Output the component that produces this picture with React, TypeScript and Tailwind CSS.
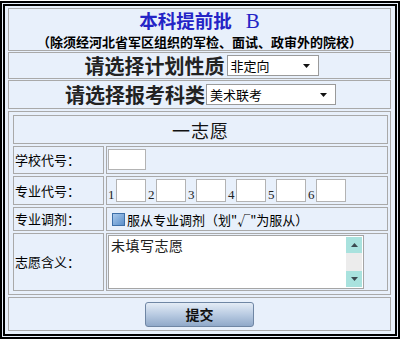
import React from 'react'

const cjk = "font-['Noto_Sans_CJK_SC','Noto_Sans',sans-serif]"
const serif = "font-['Liberation_Serif','Noto_Sans_CJK_SC',serif]"

const Cell = ({className = '', children}: {className?: string; children?: React.ReactNode}) => (
    <div className={`border border-[#a9a9a9] bg-[#e8f0fb] ${className}`}>{children}</div>
)

const FakeSelect = ({value, width}: {value: string; width: string}) => (
    <div className={`${width} h-[21px] bg-white border border-[#9a9a9a] flex items-center justify-between pl-[3px] pr-[8px]`}>
        <span className="text-[13px] font-normal text-black leading-none">{value}</span>
        <svg width="7" height="4" viewBox="0 0 7 4">
            <path d="M0 0H7L3.5 4Z" fill="#111"/>
        </svg>
    </div>
)

const App = () => {
    const codes = [1, 2, 3, 4, 5, 6]

    return (
        <div className={`w-[401px] h-[340px] bg-white pt-px ${cjk}`}>
            <div className="w-[400px] h-[338px] border-[5px] border-double border-black bg-[#e8f0fb] pt-[2px] pl-[3px] pr-[4px] flex flex-col">
                <Cell className="h-[43px] flex flex-col items-center">
                    <div className="h-[22px] pt-[2px] flex items-baseline justify-center text-[#2424c6]">
                        <span className="text-[18.5px] font-bold leading-none">本科提前批</span>
                        <span className={`${serif} text-[21px] font-normal leading-none ml-[14px]`}>B</span>
                    </div>
                    <div className="mt-[4px] text-[13px] leading-none font-bold text-black whitespace-nowrap">
                        （除须经河北省军区组织的军检、面试、政审外的院校）
                    </div>
                </Cell>

                <Cell className="h-[27px] mt-px flex items-center justify-center pl-[4px]">
                    <span className="text-[20px] font-bold text-[#222] leading-none mr-[2px]">请选择计划性质</span>
                    <FakeSelect value="非定向" width="w-[92px]"/>
                </Cell>

                <Cell className="h-[29px] mt-px flex items-center justify-center pl-[2px]">
                    <span className="text-[20px] font-bold text-[#222] leading-none mr-px">请选择报考科类</span>
                    <FakeSelect value="美术联考" width="w-[130px]"/>
                </Cell>

                <Cell className="h-[184px] mt-[2px] pt-[3px] pl-[4px] pr-[2px]">
                    <div className="flex flex-col gap-[2px]">
                        <Cell className="h-[29px] flex items-center justify-center">
                            <span className="text-[18px] text-[#111] leading-none tracking-[1px]">一志愿</span>
                        </Cell>

                        <div className="grid grid-cols-[91px_1fr] gap-[2px] text-[13px] text-black">
                            <Cell className="h-[28px] flex items-center pl-[1px]">学校代号：</Cell>
                            <Cell className="h-[28px] flex items-start pt-[2px] pl-[1px]">
                                <div className="w-[38px] h-[21px] bg-white border border-[#b3b3b3]"/>
                            </Cell>

                            <Cell className="h-[29px] flex items-center pl-[1px]">专业代号：</Cell>
                            <Cell className="h-[29px] flex items-center pl-[1px]">
                                {codes.map((n) => (
                                    <div key={n} className="flex items-end mr-[2px]">
                                        <span className={`${serif} w-[8px] text-[13px] leading-none mb-[1px] text-[#222]`}>{n}</span>
                                        <div className="w-[30px] h-[23px] bg-white border border-[#b3b3b3]"/>
                                    </div>
                                ))}
                            </Cell>

                            <Cell className="h-[24px] flex items-center pl-[1px]">专业调剂：</Cell>
                            <Cell className="h-[24px] flex items-center pl-[5px]">
                                <div className="w-[13px] h-[13px] border border-[#3d6fa8] bg-gradient-to-br from-[#a9c9ec] to-[#5b8fc9] mr-[2px]"/>
                                <span className="leading-none">服从专业调剂（划"√"为服从）</span>
                            </Cell>

                            <Cell className="h-[58px] flex items-center pl-[1px]">志愿含义：</Cell>
                            <Cell className="h-[58px] pt-[1px] pl-[1px]">
                                <div className="w-[256px] h-[54px] bg-white border border-[#a5a5a5] flex">
                                    <div className="flex-1 text-[14px] leading-[16px] text-[#222] pl-[2px] pt-[1px] tracking-[0.5px]">
                                        未填写志愿
                                    </div>
                                    <div className="w-[16px] flex flex-col my-px mr-px">
                                        <div className="h-[16px] bg-[#a9e2de] flex items-center justify-center">
                                            <svg width="7" height="4" viewBox="0 0 7 4">
                                                <path d="M0 4H7L3.5 0Z" fill="#3c4a50"/>
                                            </svg>
                                        </div>
                                        <div className="flex-1 bg-[#ececec]"/>
                                        <div className="h-[16px] bg-[#a9e2de] flex items-center justify-center">
                                            <svg width="7" height="4" viewBox="0 0 7 4">
                                                <path d="M0 0H7L3.5 4Z" fill="#3c4a50"/>
                                            </svg>
                                        </div>
                                    </div>
                                </div>
                            </Cell>
                        </div>
                    </div>
                </Cell>

                <Cell className="h-[34px] mt-[2px] flex items-center justify-center">
                    <div className="w-[109px] h-[25px] rounded-[3px] border border-[#6f86a4] bg-gradient-to-b from-[#e4ecf6] via-[#b9cbe2] to-[#90a9c9] flex items-center justify-center">
                        <span className="text-[14px] font-bold text-[#111] leading-none">提交</span>
                    </div>
                </Cell>
            </div>
        </div>
    )
}

export default App
